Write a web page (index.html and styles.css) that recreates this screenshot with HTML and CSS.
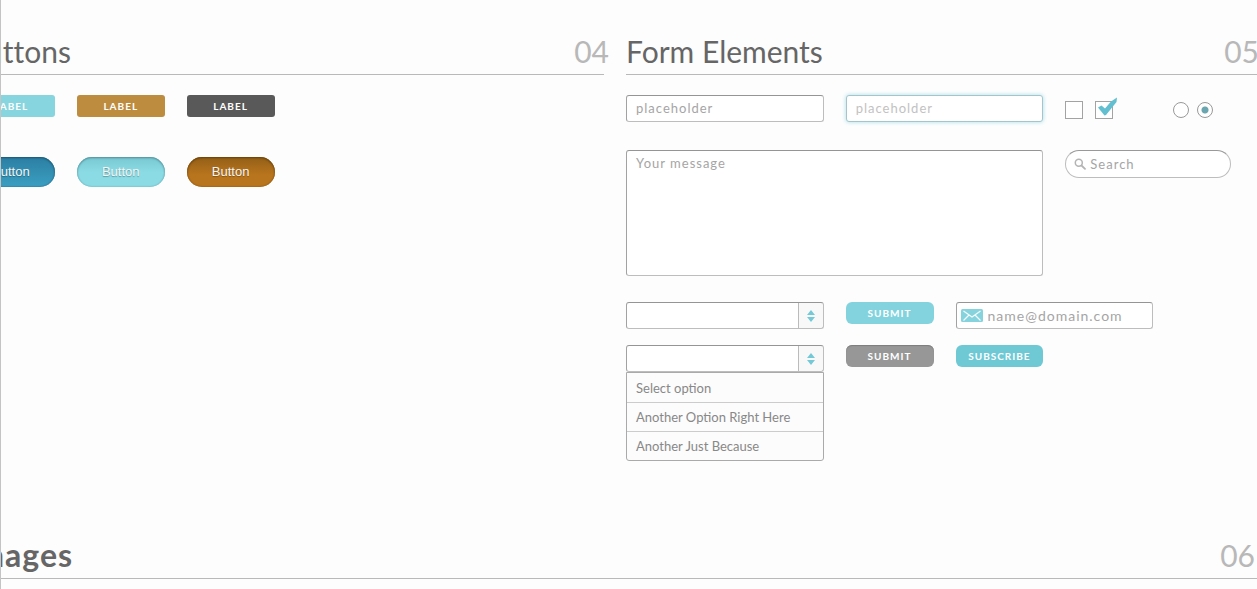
FILE: index.html
```html
<!DOCTYPE html>
<html lang="en">
<head>
<meta charset="utf-8">
<title>Style Guide</title>
<link rel="stylesheet" href="styles.css">
</head>
<body>
<main class="page">
  <div class="board">
    <section class="section">
      <header class="section-head">
        <h2 class="title">Buttons</h2>
        <span class="number number-out">04</span>
      </header>
      <div class="row labels">
        <button type="button" class="tag tag-aqua">LABEL</button>
        <button type="button" class="tag tag-gold">LABEL</button>
        <button type="button" class="tag tag-dark">LABEL</button>
      </div>
      <div class="row pills">
        <button type="button" class="pill pill-blue">Button</button>
        <button type="button" class="pill pill-aqua">Button</button>
        <button type="button" class="pill pill-brown">Button</button>
      </div>
    </section>

    <section class="section">
      <header class="section-head">
        <h2 class="title">Form Elements</h2>
        <span class="number number-in">05</span>
      </header>
      <form class="form">
        <div class="row">
          <input class="field span-2" type="text" placeholder="placeholder" aria-label="Text">
          <input class="field field-active span-2" type="text" placeholder="placeholder" aria-label="Active text">
          <div class="choices span-2">
            <input class="check" type="checkbox" aria-label="Unchecked">
            <span class="check-wrap">
              <input class="check" type="checkbox" aria-label="Checked" checked>
              <svg class="tick" viewBox="0 0 20 20" aria-hidden="true"><path d="M1 10.500 4.500 8.500 8 11.500 14 4.500 20 .500 19.500 5 9 18 7.500 18.500Z" fill="#62bfd0"/></svg>
            </span>
            <span class="radios">
              <input class="radio" type="radio" name="pick" aria-label="First">
              <input class="radio" type="radio" name="pick" aria-label="Second" checked>
            </span>
          </div>
        </div>
        <div class="row row-message">
          <textarea class="field message span-4" placeholder="Your message" aria-label="Your message"></textarea>
          <label class="search span-2">
            <svg class="search-icon" viewBox="0 0 12 12" aria-hidden="true"><circle cx="4.800" cy="4.800" r="3.500" fill="none" stroke="#b4b4b4" stroke-width="1.500"/><path d="M7.500 7.500 11 10.800" stroke="#b4b4b4" stroke-width="1.800" stroke-linecap="round"/></svg>
            <input class="bare" type="search" placeholder="Search" aria-label="Search">
          </label>
        </div>
        <div class="row row-select">
          <div class="picker span-2">
            <select class="select" aria-label="Option"><option></option><option>Select option</option></select>
            <svg class="arrows" viewBox="0 0 8 12" aria-hidden="true"><path d="M4 0 8 5H0ZM4 12 0 7H8Z" fill="#74c9d6"/></svg>
          </div>
          <button type="button" class="action action-aqua">SUBMIT</button>
          <label class="field email span-2">
            <svg class="mail-icon" viewBox="0 0 22 13" aria-hidden="true"><rect width="22" height="13" rx="1.500" fill="#86d3de"/><path d="M2.500 2 11 8 19.500 2M2.500 11.500 8 6M19.500 11.500 14 6" fill="none" stroke="#f4fcfd" stroke-width="1.200"/></svg>
            <input class="bare bare-large" type="email" placeholder="name@domain.com" aria-label="Email">
          </label>
        </div>
        <div class="row row-open">
          <div class="span-2">
            <div class="picker">
              <select class="select" aria-label="Open option"><option></option><option>Select option</option></select>
              <svg class="arrows" viewBox="0 0 8 12" aria-hidden="true"><path d="M4 0 8 5H0ZM4 12 0 7H8Z" fill="#74c9d6"/></svg>
            </div>
            <div class="menu">
              <button type="button" class="option">Select option</button>
              <button type="button" class="option">Another Option Right Here</button>
              <button type="button" class="option">Another Just Because</button>
            </div>
          </div>
          <button type="button" class="action action-grey">SUBMIT</button>
          <button type="button" class="action action-teal">SUBSCRIBE</button>
        </div>
      </form>
    </section>

    <section class="section section-wide">
      <header class="section-head">
        <h2 class="title title-bold">Images</h2>
        <span class="number number-edge">06</span>
      </header>
    </section>
  </div>
</main>
</body>
</html>
```
FILE: styles.css
```css
* { box-sizing: border-box; }

body {
  margin: 0;
  background: #fdfdfd;
  color: #666;
  font-family: Lato, "Open Sans", sans-serif;
}

button, input, select, textarea { font-family: inherit; margin: 0; }
button { border: 0; padding: 0; cursor: pointer; }

.page {
  min-height: 100vh;
  overflow: hidden;
  border-left: 1px solid #c4c4c4;
}

.board {
  display: grid;
  grid-template-columns: 1fr 1fr;
  column-gap: 22px;
  margin: 0 -6px 0 -34px;
}

.section-wide { grid-column: 1 / -1; padding-top: 43px; }

.section-head {
  display: flex;
  justify-content: space-between;
  align-items: flex-end;
  height: 75px;
  padding-bottom: 5px;
  border-bottom: 1px solid #b9b9b9;
}

.title {
  margin: 0;
  font-size: 30px;
  line-height: 36px;
  font-weight: 400;
  font-variant-ligatures: none;
  color: #666;
}
.title-bold { font-size: 32px; font-weight: 700; letter-spacing: 1px; }

.number { font-size: 30px; line-height: 36px; color: #b8b8b8; }
.number-out { margin-right: -5px; }
.number-in { margin-right: 4px; }
.number-edge { margin-right: 8px; }

.row {
  display: grid;
  grid-template-columns: repeat(6, 1fr);
  column-gap: 22px;
  align-items: start;
}
.row > * { min-width: 0; }
.span-2 { grid-column: span 2; }
.span-4 { grid-column: span 4; }

.labels { padding-top: 20px; }
.pills { padding-top: 40px; }

.tag {
  height: 22px;
  border-radius: 3px;
  color: #fff;
  font-size: 10px;
  font-weight: 700;
  letter-spacing: 1px;
}
.tag-aqua { background: #86d5df; }
.tag-gold { background: #be8c3f; }
.tag-dark { background: #595959; }

.pill {
  height: 30px;
  padding-bottom: 2px;
  border-radius: 15px;
  color: #f5f5f5;
  font-family: "Liberation Sans", Arial, sans-serif;
  font-size: 13px;
  text-shadow: 0 1px 1px rgba(0, 0, 0, .3);
}
.pill-blue { background: linear-gradient(#2b7fa3, #3b9fc2); box-shadow: inset 0 1px 2px #1c5872, inset 0 0 2px #236c8b; }
.pill-aqua { background: linear-gradient(#78c8d2, #8bdbe4 50%); box-shadow: inset 0 1px 2px #558f98, inset 0 0 2px #66b5c0; }
.pill-brown { background: linear-gradient(#925f18, #b9751d 60%); box-shadow: inset 0 1px 2px #654008, inset 0 0 2px #935610; }

.form { padding-top: 20px; }
.row-message { padding-top: 28px; }
.row-select { padding-top: 26px; }
.row-open { padding-top: 16px; }

.field {
  width: 100%;
  height: 27px;
  padding: 0 9px 2px;
  border: 1px solid #bdbdbd;
  border-top-color: #959595;
  border-left-color: #a2a2a2;
  border-radius: 3px;
  background: #fff;
  color: #777;
  font-size: 13px;
  letter-spacing: 1px;
  outline: 0;
}
.field::placeholder, .bare::placeholder { color: #a5a5a5; opacity: 1; }
.field-active {
  border-color: #a5c5cc;
  box-shadow: 0 0 4px #a5dce6;
}
.field-active::placeholder { color: #c2c2c2; }

.message {
  display: block;
  height: 126px;
  padding: 4px 9px;
  line-height: 16px;
  resize: none;
}

.choices { display: flex; align-items: center; padding-top: 6px; }
.check {
  display: block;
  appearance: none;
  width: 18px;
  height: 18px;
  border: 1px solid #a3a3a3;
  background: #fff;
}
.check-wrap { position: relative; margin-left: 12px; }
.tick { position: absolute; left: 2px; top: -4px; width: 20px; height: 20px; pointer-events: none; }
.radios { display: flex; gap: 8px; margin-left: 60px; }
.radio {
  appearance: none;
  width: 16px;
  height: 16px;
  border: 1px solid #999;
  border-radius: 50%;
  background: #fff;
}
.radio:checked { background: radial-gradient(circle, #6ba5b0 3px, #fff 4px); }

.search {
  display: flex;
  align-items: center;
  gap: 4px;
  height: 28px;
  margin-right: 32px;
  padding: 0 8px;
  border: 1px solid #bdbdbd;
  border-top-color: #999;
  border-radius: 14px;
  background: #fff;
}
.search-icon { flex: none; width: 12px; height: 12px; }

.bare {
  flex: 1;
  min-width: 0;
  width: 100%;
  padding: 0;
  border: 0;
  outline: 0;
  background: none;
  color: #777;
  font-size: 13px;
  letter-spacing: 1px;
}
.bare-large { font-size: 14px; }

.picker { position: relative; }
.select {
  display: block;
  appearance: none;
  width: 100%;
  height: 27px;
  border: 1px solid #bdbdbd;
  border-top-color: #959595;
  border-left-color: #a2a2a2;
  border-radius: 3px;
  background: linear-gradient(to left, #f8f8f8 24px, #bbb 24px, #bbb 25px, #fff 25px);
}
.arrows { position: absolute; right: 9px; top: 8px; width: 8px; height: 12px; pointer-events: none; }

.menu {
  border: 1px solid #aaa;
  border-radius: 0 0 3px 3px;
  background: #fcfcfc;
}
.option {
  display: block;
  width: 100%;
  height: 29px;
  padding: 0 9px;
  background: none;
  color: #888;
  font-size: 13px;
  text-align: left;
  white-space: nowrap;
}
.option + .option { border-top: 1px solid #ccc; }

.action {
  height: 22px;
  border-radius: 6px;
  color: #fff;
  font-size: 10px;
  font-weight: 700;
  letter-spacing: 1px;
}
.action-aqua { background: #82d3de; }
.action-grey { background: #979797; box-shadow: inset 0 1px 1px #7d7d7d; }
.action-teal { background: #6ec9d5; }

.email { display: flex; align-items: center; gap: 5px; padding: 0 4px; }
.mail-icon { flex: none; width: 22px; height: 13px; }
```
